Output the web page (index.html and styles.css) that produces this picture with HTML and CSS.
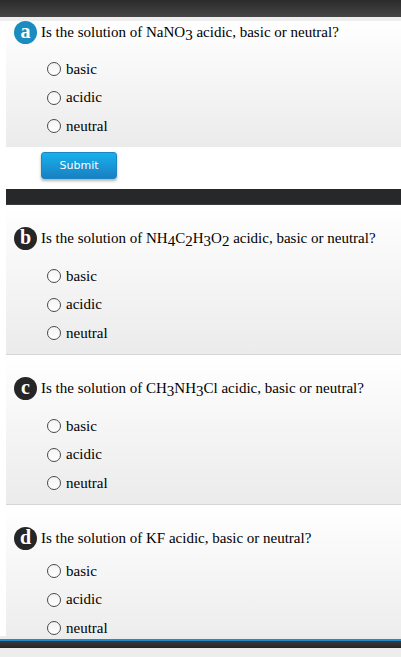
FILE: index.html
```html
<!DOCTYPE html>
<html lang="en">

<head>
    <meta charset="UTF-8">
    <meta name="viewport" content="width=device-width, initial-scale=1.0">
    <title>Acids and Bases</title>
    <link rel="stylesheet" href="styles.css">
</head>

<body>
    <div class="top-bar"></div>
    <div class="top-strip"></div>

    <div class="content">
        <div class="panel panel-first">
            <div class="question">
                <span class="badge badge-active">a</span>
                <span class="question-text">Is the solution of NaNO<span class="sub">3</span> acidic, basic or neutral?</span>
            </div>
            <div class="options">
                <label class="option"><span class="radio"></span>basic</label>
                <label class="option"><span class="radio"></span>acidic</label>
                <label class="option"><span class="radio"></span>neutral</label>
            </div>
        </div>

        <div class="actions">
            <button class="submit-btn">Submit</button>
        </div>

        <div class="divider"></div>

        <div class="panel">
            <div class="question">
                <span class="badge">b</span>
                <span class="question-text">Is the solution of NH<span class="sub">4</span>C<span class="sub">2</span>H<span class="sub">3</span>O<span class="sub">2</span> acidic, basic or neutral?</span>
            </div>
            <div class="options">
                <label class="option"><span class="radio"></span>basic</label>
                <label class="option"><span class="radio"></span>acidic</label>
                <label class="option"><span class="radio"></span>neutral</label>
            </div>
        </div>

        <div class="panel">
            <div class="question">
                <span class="badge">c</span>
                <span class="question-text">Is the solution of CH<span class="sub">3</span>NH<span class="sub">3</span>Cl acidic, basic or neutral?</span>
            </div>
            <div class="options">
                <label class="option"><span class="radio"></span>basic</label>
                <label class="option"><span class="radio"></span>acidic</label>
                <label class="option"><span class="radio"></span>neutral</label>
            </div>
        </div>

        <div class="panel panel-last">
            <div class="question">
                <span class="badge">d</span>
                <span class="question-text">Is the solution of KF acidic, basic or neutral?</span>
            </div>
            <div class="options">
                <label class="option"><span class="radio"></span>basic</label>
                <label class="option"><span class="radio"></span>acidic</label>
                <label class="option"><span class="radio"></span>neutral</label>
            </div>
        </div>
    </div>

    <div class="bottom-bar">
        <div class="bottom-strip"></div>
        <div class="bottom-line"></div>
        <div class="bottom-dark"></div>
        <div class="bottom-light"></div>
    </div>
</body>

</html>
```

FILE: styles.css
```css
body {
    margin: 0;
    background-color: #fff;
    color: #000;
    font-family: 'Liberation Serif', 'Times New Roman', serif;
}

.top-bar {
    height: 17px;
    background: linear-gradient(#2b2b2b, #464646);
}

.top-strip {
    height: 4px;
    background-color: #eee;
}

.content {
    padding-left: 6px;
}

.panel {
    padding: 21px 0 6.5px;
    background: linear-gradient(#fff, #ebebeb);
    border-bottom: 1px solid #d6d6d6;
}

.panel-first {
    padding-top: 0;
    border-bottom: none;
    overflow: hidden;
}

.panel-first .question {
    margin-top: -1px;
}

.panel-first .options {
    margin-top: 11px;
}

.panel-last .options {
    margin-top: 7px;
}

.question {
    display: flex;
    align-items: center;
    height: 24px;
    padding-left: 8px;
}

.badge {
    width: 23px;
    height: 23px;
    border-radius: 50%;
    background-color: #262626;
    color: #fff;
    font-weight: bold;
    font-size: 20px;
    line-height: 21px;
    text-align: center;
    flex-shrink: 0;
}

.badge-active {
    background-color: #1a8cc0;
}

.question-text {
    margin-left: 4px;
    font-size: 15px;
    white-space: nowrap;
}

.sub {
    position: relative;
    top: 3px;
}

.options {
    margin-top: 12px;
    padding-left: 41px;
}

.option {
    display: flex;
    align-items: center;
    height: 28.5px;
    font-size: 15px;
}

.radio {
    width: 12px;
    height: 12px;
    border: 1px solid #4a4a4a;
    border-radius: 50%;
    background: linear-gradient(#f4f4f4, #fff);
    margin-right: 5px;
}

.actions {
    padding: 5px 0 10px 35px;
}

.submit-btn {
    width: 76px;
    height: 27px;
    padding: 0;
    background: linear-gradient(#17b1ee, #1a7fc2);
    color: #fff;
    border: 1px solid #1a86c4;
    border-radius: 3px;
    box-shadow: 0 2px 3px rgba(0, 0, 0, 0.3);
    font-family: 'DejaVu Sans', Verdana, sans-serif;
    font-size: 11px;
    cursor: pointer;
}

.divider {
    height: 16px;
    background-color: #27282a;
    border-bottom: 1px solid #3a3b3d;
    box-sizing: border-box;
}

.bottom-bar {
    position: fixed;
    left: 0;
    right: 0;
    bottom: 0;
}

.bottom-strip {
    height: 3px;
    background-color: #ebebeb;
}

.bottom-line {
    height: 2px;
    background-color: #1b8bc9;
}

.bottom-dark {
    height: 7px;
    background: linear-gradient(#3a3a3a, #262626);
}

.bottom-light {
    height: 9px;
    background-color: #ededed;
}
```
